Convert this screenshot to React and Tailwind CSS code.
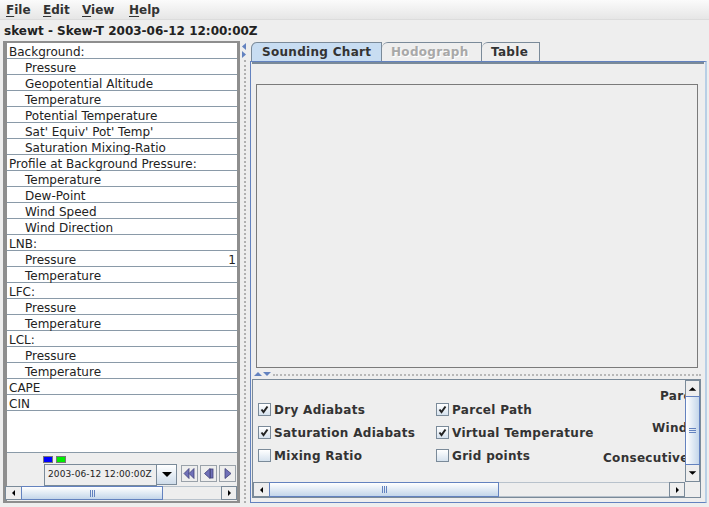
import React from 'react';

const rows = [
  ['Background:', 0],
  ['Pressure', 1],
  ['Geopotential Altitude', 1],
  ['Temperature', 1],
  ['Potential Temperature', 1],
  ["Sat' Equiv' Pot' Temp'", 1],
  ['Saturation Mixing-Ratio', 1],
  ['Profile at Background Pressure:', 0],
  ['Temperature', 1],
  ['Dew-Point', 1],
  ['Wind Speed', 1],
  ['Wind Direction', 1],
  ['LNB:', 0],
  ['Pressure', 1, '1'],
  ['Temperature', 1],
  ['LFC:', 0],
  ['Pressure', 1],
  ['Temperature', 1],
  ['LCL:', 0],
  ['Pressure', 1],
  ['Temperature', 1],
  ['CAPE', 0],
  ['CIN', 0],
];

const Menu = ({ label }) => (
  <span>
    <span className="underline underline-offset-2">{label[0]}</span>
    {label.slice(1)}
  </span>
);

const ArrowBtn = ({ dir, className = '' }) => {
  const pts = {
    left: '6,4 6,10 3,7',
    right: '4,4 4,10 7,7',
    up: '3,9 11,9 7,5',
    down: '3,5 11,5 7,9',
  }[dir];
  const vert = dir === 'up' || dir === 'down';
  return (
    <div className={`flex items-center justify-center bg-[#eeeeee] border border-[#7a8a99] ${className}`}>
      <svg width={vert ? 14 : 10} height="14" viewBox={vert ? '0 0 14 14' : '0 0 10 14'}>
        <polygon points={pts} fill="#000" />
      </svg>
    </div>
  );
};

const HScroll = ({ thumb, track }) => (
  <div className="flex h-full">
    <ArrowBtn dir="left" className="w-[16px] border-r-0" />
    <div className={`flex items-center justify-center border border-[#6382bf] bg-gradient-to-b from-[#ffffff] to-[#c4d6ea] ${thumb}`}>
      <div className="flex gap-[1px]">
        <div className="w-px h-[7px] bg-[#6382bf]" />
        <div className="w-px h-[7px] bg-[#6382bf]" />
        <div className="w-px h-[7px] bg-[#6382bf]" />
      </div>
    </div>
    <div className={`bg-[#eeeeee] border-y border-[#b8c2cc] ${track}`} />
    <ArrowBtn dir="right" className="w-[16px]" />
  </div>
);

const Check = ({ checked, label }) => (
  <div className="flex items-center h-[23px]">
    <div className="w-[13px] h-[13px] border border-[#7a8a99] bg-gradient-to-b from-[#ffffff] to-[#d6e2ee] flex items-center justify-center">
      {checked && (
        <svg width="9" height="9" viewBox="0 0 9 9">
          <path d="M1.5 4.5 L3.5 7 L7.5 1.5" stroke="#222" strokeWidth="2" fill="none" />
        </svg>
      )}
    </div>
    <span className="ml-[3px] font-bold text-[12px] tracking-[0.3px] text-[#333333] whitespace-nowrap">{label}</span>
  </div>
);

const MediaBtn = ({ children }) => (
  <div className="w-[17px] h-[17px] border border-[#9aa2aa] bg-[#eeeeee] flex items-center justify-center">
    <svg width="15" height="15" viewBox="0 0 15 15">{children}</svg>
  </div>
);

export default function App() {
  return (
    <div className="w-[709px] h-[507px] overflow-hidden bg-[#eeeeee] font-['DejaVu_Sans',sans-serif] text-[#333333] flex flex-col">
      {/* menu bar */}
      <div className="h-[20px] flex items-center text-[12px] font-bold bg-gradient-to-b from-[#fbfbfb] to-[#e6e6e6] border-b border-[#dcdcdc] pl-[6px]">
        <div className="w-[37px]"><Menu label="File" /></div>
        <div className="w-[39px]"><Menu label="Edit" /></div>
        <div className="w-[47px]"><Menu label="View" /></div>
        <div><Menu label="Help" /></div>
      </div>

      {/* title */}
      <div className="h-[20px] pt-[3px] leading-[17px] pl-[4px] text-[12px] font-bold text-[#222]">
        skewt - Skew-T 2003-06-12 12:00:00Z
      </div>

      <div className="flex flex-1">
        {/* left panel */}
        <div className="ml-[3px] mt-[1px] w-[237px] h-[462px] border-l-4 border-r-[3px] border-t-2 border-b-2 border-[#8e8e8e] flex flex-col">
          <div className="h-[410px] bg-white border-b border-[#8a9aa8] text-[12px] text-[#222]">
            {rows.map(([label, indent, val], i) => (
              <div
                key={i}
                className={`h-[16px] leading-[19px] border-b border-[#8a9aa8] flex justify-between whitespace-nowrap ${indent ? 'pl-[18px]' : 'pl-[2px]'}`}
              >
                <span>{label}</span>
                {val && <span className="pr-[1px]">{val}</span>}
              </div>
            ))}
          </div>

          {/* controls */}
          <div className="h-[33px] bg-[#eeeeee] flex flex-col">
            <div className="flex gap-[3px] ml-[36px] mt-[3px]">
              <div className="w-[10px] h-[7px] bg-[#0000ff] border border-[#777]" />
              <div className="w-[10px] h-[7px] bg-[#00ee00] border border-[#777]" />
            </div>
            <div className="flex mt-[1px] ml-[37px]">
              <div className="w-[113px] h-[22px] border border-[#7a8a99] bg-[#eeeeee] flex items-center pl-[3px] text-[9px] tracking-[0.1px] text-[#222]">
                2003-06-12 12:00:00Z
              </div>
              <div className="w-[20px] h-[21px] border border-[#7a8a99] border-l-0 bg-gradient-to-b from-[#ffffff] to-[#cfdcea] flex items-center justify-center">
                <svg width="10" height="6" viewBox="0 0 10 6"><polygon points="0,0 10,0 5,5" fill="#000" /></svg>
              </div>
              <div className="flex gap-[2px] ml-[4px] mt-[1px]">
                <MediaBtn>
                  <polygon points="7,2.5 7,12.5 2,7.5" fill="#7070b8" stroke="#404078" strokeWidth="0.8" />
                  <polygon points="12,2.5 12,12.5 7,7.5" fill="#7070b8" stroke="#404078" strokeWidth="0.8" />
                </MediaBtn>
                <MediaBtn>
                  <polygon points="9,2.5 9,12.5 3.5,7.5" fill="#7070b8" stroke="#404078" strokeWidth="0.8" />
                  <rect x="9.5" y="3" width="2.5" height="9" fill="#7070b8" stroke="#404078" strokeWidth="0.8" />
                </MediaBtn>
                <MediaBtn>
                  <polygon points="5,2.5 5,12.5 11,7.5" fill="#7070b8" stroke="#404078" strokeWidth="0.8" />
                </MediaBtn>
              </div>
            </div>
          </div>

          {/* scrollbar */}
          <div className="h-[14px] -ml-[2px]">
            <HScroll thumb="w-[142px]" track="w-[58px]" />
          </div>
        </div>

        {/* split divider */}
        <div className="w-[9px] relative flex justify-center">
          <div className="absolute top-[3px] left-[1px]">
            <svg width="6" height="16" viewBox="0 0 6 16">
              <polygon points="5,0 5,7 1,3.5" fill="#6382bf" />
              <polygon points="1,8 1,15 5,11.5" fill="#6382bf" />
            </svg>
          </div>
          <div className="mt-[20px] mb-[4px] border-l-2 border-dotted border-[#b0b0b0]" />
        </div>

        {/* right panel */}
        <div className="w-[459px] mt-[1px] flex flex-col">
          <div className="h-[20px] flex items-end pl-[2px] text-[12px] font-bold tracking-[0.3px]">
            <div className="w-[131px] h-[19px] bg-[#c8ddf2] border border-b-0 border-[#7a8a99] rounded-tl-[6px] pl-[10px] leading-[18px] text-[#333]">
              Sounding Chart
            </div>
            <div className="w-[100px] h-[19px] border-t border-r border-[#7a8a99] rounded-tl-[6px] pl-[9px] leading-[18px] text-[#a8a8a8] [text-shadow:1px_1px_0_#ffffff]">
              Hodograph
            </div>
            <div className="w-[58px] h-[19px] border-t border-r border-[#7a8a99] rounded-tl-[6px] pl-[9px] leading-[18px] text-[#333]">
              Table
            </div>
          </div>

          <div className="ml-[1px] w-[457px] h-[442px] border border-[#6382bf] border-r-2 border-r-[#b8cfe5] flex flex-col">
            <div className="h-[2px] bg-[#7a8a99] ml-[1px] mr-[1px]" />
            {/* top pane */}
            <div className="h-[307px] pl-[5px] pt-[20px]">
              <div className="w-[442px] h-[284px] border border-[#7a7a7a]" />
            </div>
            {/* horizontal divider */}
            <div className="h-[8px] flex items-center">
              <svg width="20" height="8" viewBox="0 0 20 8" className="ml-[2px] shrink-0">
                <polygon points="1,5 9,5 5,1" fill="#6382bf" />
                <polygon points="10,1 18,1 14,5" fill="#6382bf" />
              </svg>
              <div className="flex-1 mr-[4px] border-t-2 border-dotted border-[#b8b8b8]" />
            </div>
            {/* bottom pane */}
            <div className="ml-[1px] w-[449px] h-[119px] border border-[#7a8a99] flex flex-col">
              <div className="flex h-[102px]">
                <div className="w-[432px] overflow-hidden flex">
                  <div className="pl-[5px] pt-[18px] w-[183px] shrink-0">
                    <Check checked label="Dry Adiabats" />
                    <Check checked label="Saturation Adiabats" />
                    <Check label="Mixing Ratio" />
                  </div>
                  <div className="pt-[18px] w-[167px] shrink-0">
                    <Check checked label="Parcel Path" />
                    <Check checked label="Virtual Temperature" />
                    <Check label="Grid points" />
                  </div>
                  <div className="flex flex-col text-[12px] font-bold tracking-[0.3px] leading-[15px] whitespace-nowrap">
                    <div className="mt-[9px] ml-[57px]">Parcel</div>
                    <div className="mt-[17px] ml-[49px]">Wind</div>
                    <div className="mt-[15px]">Consecutive</div>
                  </div>
                </div>
                {/* vertical scrollbar */}
                <div className="w-[15px] flex flex-col">
                  <ArrowBtn dir="up" className="h-[16px] border-b-0" />
                  <div className="h-[69px] border border-[#6382bf] bg-gradient-to-r from-[#ffffff] to-[#c4d6ea] flex items-center justify-center">
                    <div className="flex flex-col gap-[1px]">
                      <div className="h-px w-[7px] bg-[#6382bf]" />
                      <div className="h-px w-[7px] bg-[#6382bf]" />
                      <div className="h-px w-[7px] bg-[#6382bf]" />
                    </div>
                  </div>
                  <ArrowBtn dir="down" className="h-[17px] border-t-0" />
                </div>
              </div>
              <div className="flex h-[15px]">
                <div className="w-[432px]">
                  <HScroll thumb="w-[230px]" track="w-[170px]" />
                </div>
                <div className="w-[15px] bg-[#eeeeee]" />
              </div>
            </div>
          </div>
        </div>
      </div>
    </div>
  );
}
